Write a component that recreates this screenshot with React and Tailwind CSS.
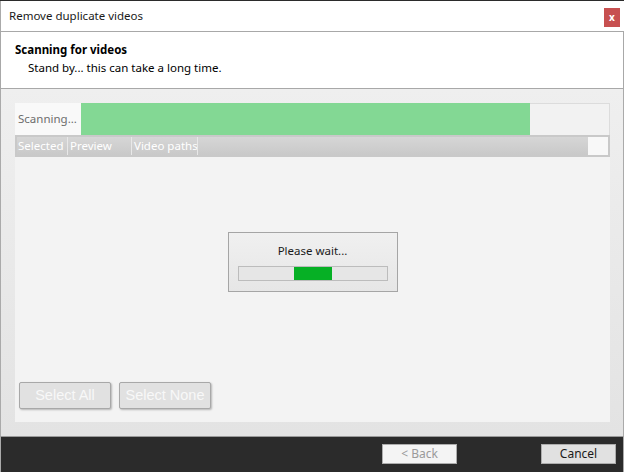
export default function App() {
  return (
    <div className="w-[624px] h-[472px] flex flex-col overflow-hidden bg-[#2b2b2b] text-black" style={{ fontFamily: '"Noto Sans", "Open Sans", sans-serif' }}>
      <div className="h-px bg-[#2b2b2b] shrink-0" />
      {/* Title bar */}
      <div className="h-[30px] shrink-0 bg-white flex items-center justify-between pl-2 border-l border-[#aaaaaa]">
        <span className="text-[11.5px] leading-none text-[#1a1a1a]">Remove duplicate videos</span>
        <div className="w-4 h-[19px] mr-[4px] mt-[2px] bg-[#c75050] flex items-center justify-center text-white text-[10px] font-bold leading-none">x</div>
      </div>
      {/* Header */}
      <div className="h-[58px] shrink-0 bg-white border border-[#a8a8a8] pl-[14px] pt-[9px] flex flex-col">
        <span className="text-[11.5px] font-bold leading-[18px]">Scanning for videos</span>
        <span className="text-[11.5px] leading-[18px] pl-[13px]">Stand by... this can take a long time.</span>
      </div>
      {/* Body */}
      <div className="flex-1 min-h-0 bg-gradient-to-b from-[#efefef] to-[#e3e3e3] border-x border-[#aaaaaa] pl-[14px] pr-[13px] pt-[14px] pb-[14px] flex">
        <div className="flex-1 bg-[#f3f3f3] flex flex-col">
          {/* Scanning row */}
          <div className="h-[32px] shrink-0 flex">
            <div className="w-[66px] bg-[#f9f9f9] flex items-center pl-[3px] text-[11.5px] text-[#6d6d6d] whitespace-nowrap">Scanning...</div>
            <div className="flex-1 flex border-t border-r border-[#dcdcdc]">
              <div className="w-[449px] bg-[#83d894] -mt-px" />
              <div className="flex-1 bg-[#f2f2f2]" />
            </div>
          </div>
          {/* Table header */}
          <div className="h-[22px] shrink-0 border-2 border-[#c9c9c9] flex bg-gradient-to-b from-[#d6d6d6] to-[#c9c9c9] text-[11.5px] text-white leading-none whitespace-nowrap">
            <div className="w-[51px] flex items-center pl-[1px] border-r border-[#e8e8e8] overflow-hidden">Selected</div>
            <div className="w-[64px] flex items-center pl-[2px] border-r border-[#e8e8e8] overflow-hidden">Preview</div>
            <div className="w-[66px] flex items-center pl-[2px] border-r border-[#e8e8e8] overflow-hidden">Video paths</div>
            <div className="flex-1" />
            <div className="w-[20px] bg-[#f8f8f8]" />
          </div>
          {/* Content */}
          <div className="flex-1 flex flex-col">
            <div className="mt-[75px] self-center w-[170px] h-[60px] border border-[#a5a5a5] bg-gradient-to-b from-[#f0f0f0] to-[#e6e6e6] flex flex-col items-center">
              <span className="mt-[9px] text-[11.5px] leading-[18px] text-[#1a1a1a]">Please wait...</span>
              <div className="mt-[6px] w-[150px] h-[15px] border border-[#bcbcbc] bg-[#e6e6e6] pl-[55px]">
                <div className="w-[38px] h-full bg-[#06b025]" />
              </div>
            </div>
            <div className="flex-1" />
            <div className="flex gap-[8px] pl-[4px] pb-[13px]">
              <div className="w-[92px] h-[27px] border border-[#a8a8a8] rounded-[2px] bg-[#e1e1e1] shadow-[1px_1px_2px_rgba(0,0,0,0.25)] flex items-center justify-center text-[14.5px] text-[#f8f8f8]" style={{ fontFamily: '"Liberation Sans", Arial, sans-serif' }}>Select All</div>
              <div className="w-[92px] h-[27px] border border-[#a8a8a8] rounded-[2px] bg-[#e1e1e1] shadow-[1px_1px_2px_rgba(0,0,0,0.25)] flex items-center justify-center text-[14.5px] text-[#f8f8f8]" style={{ fontFamily: '"Liberation Sans", Arial, sans-serif' }}>Select None</div>
            </div>
          </div>
        </div>
      </div>
      {/* Footer */}
      <div className="h-[36px] shrink-0 bg-[#2b2b2b] border-t border-[#9a9a9a] border-x border-x-[#aaaaaa] flex items-start justify-end pt-[7px] pr-[7px] gap-[84px]">
        <div className="w-[75px] h-[20px] border border-[#adadad] bg-[#f4f4f4] flex items-center justify-center text-[12px] text-[#9a9a9a] leading-none">&lt; Back</div>
        <div className="w-[75px] h-[20px] border border-[#adadad] bg-[#e1e1e1] flex items-center justify-center text-[12px] text-[#1a1a1a] leading-none">Cancel</div>
      </div>
    </div>
  );
}
